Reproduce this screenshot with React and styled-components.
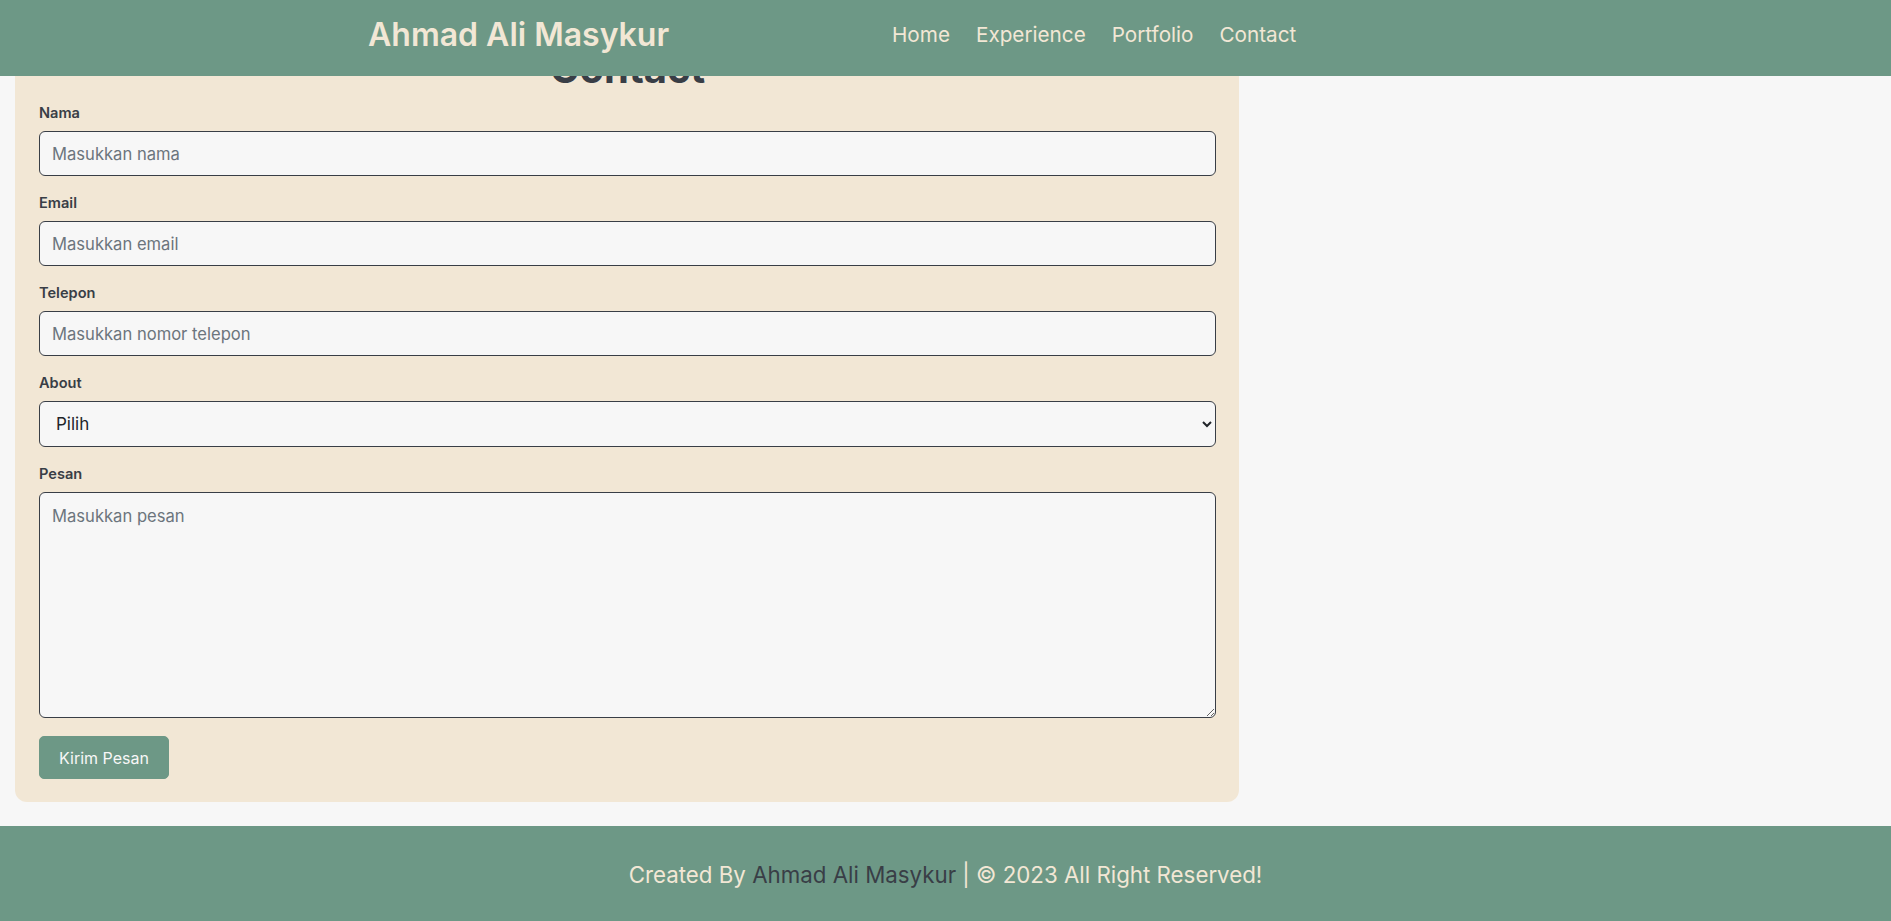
import React from 'react';
import styled, { createGlobalStyle } from 'styled-components';

const GlobalStyle = createGlobalStyle`
  * {
    box-sizing: border-box;
  }

  body {
    margin: 0;
    background: #f7f7f7;
    font-family: 'Inter', 'Noto Sans', sans-serif;
    color: #393e46;
  }
`;

const Header = styled.header`
  position: fixed;
  top: 0;
  left: 0;
  right: 0;
  z-index: 10;
  height: 76px;
  background: #6d9886;
  display: flex;
  align-items: center;
  padding: 0 0 7px 368px;
`;

const Brand = styled.a`
  font-size: 32px;
  font-weight: 600;
  color: #f2e7d5;
  text-decoration: none;
  width: 524px;
`;

const Nav = styled.nav`
  display: flex;
  gap: 26px;
`;

const NavLink = styled.a`
  font-size: 20.7px;
  color: #f2e7d5;
  text-decoration: none;
`;

const Main = styled.main`
  padding: 0 15px 24px;
`;

const Card = styled.section`
  width: 1224px;
  background: #f2e7d5;
  border-radius: 0 0 12px 12px;
  padding: 45px 23px 23px 24px;
`;

const Title = styled.h2`
  margin: 0 0 9px;
  font-size: 40px;
  line-height: 48px;
  font-weight: 700;
  text-align: center;
  color: #393e46;
`;

const Field = styled.div`
  margin-bottom: ${(p) => (p.$last ? '18px' : '16px')};
`;

const Label = styled.label`
  display: block;
  font-size: 14.6px;
  line-height: 22px;
  font-weight: 600;
  margin-bottom: 7px;
  color: #393e46;
`;

const Input = styled.input`
  display: block;
  width: 100%;
  height: 45px;
  padding: 0 12px;
  font-family: inherit;
  font-size: 16.6px;
  color: #212529;
  background: #f7f7f7;
  border: 1px solid #393e46;
  border-radius: 6px;
  outline: none;

  &::placeholder {
    color: #6c757d;
  }
`;

const Select = styled.select`
  display: block;
  width: 100%;
  height: 46px;
  padding: 0 12px;
  font-family: inherit;
  font-size: 17px;
  color: #212529;
  background: #f7f7f7;
  border: 1px solid #393e46;
  border-radius: 6px;
  outline: none;
`;

const TextArea = styled.textarea`
  display: block;
  width: 100%;
  height: 226px;
  padding: 11px 12px;
  font-family: inherit;
  font-size: 16.6px;
  line-height: 1.5;
  color: #212529;
  background: #f7f7f7;
  border: 1px solid #393e46;
  border-radius: 6px;
  outline: none;

  &::placeholder {
    color: #6c757d;
  }
`;

const Button = styled.button`
  height: 43px;
  padding: 0 19px;
  font-family: inherit;
  font-size: 16px;
  color: #f7f7f7;
  background: #6d9886;
  border: 1px solid #6d9886;
  border-radius: 5px;
  cursor: pointer;
`;

const Footer = styled.footer`
  height: 96px;
  background: #6d9886;
  display: flex;
  align-items: center;
  justify-content: center;
  font-size: 22.3px;
  color: #f2e7d5;
`;

const FooterName = styled.span`
  color: #393e46;
`;

const fields = [
  { id: 'nama', label: 'Nama', placeholder: 'Masukkan nama', type: 'text' },
  { id: 'email', label: 'Email', placeholder: 'Masukkan email', type: 'email' },
  { id: 'telepon', label: 'Telepon', placeholder: 'Masukkan nomor telepon', type: 'tel' },
];

export default function App() {
  return (
    <>
      <GlobalStyle />
      <Header>
        <Brand href="#">Ahmad Ali Masykur</Brand>
        <Nav>
          <NavLink href="#">Home</NavLink>
          <NavLink href="#">Experience</NavLink>
          <NavLink href="#">Portfolio</NavLink>
          <NavLink href="#">Contact</NavLink>
        </Nav>
      </Header>

      <Main>
        <Card>
          <Title>Contact</Title>
          {fields.map((f) => (
            <Field key={f.id}>
              <Label htmlFor={f.id}>{f.label}</Label>
              <Input id={f.id} type={f.type} placeholder={f.placeholder} />
            </Field>
          ))}
          <Field>
            <Label htmlFor="about">About</Label>
            <Select id="about" defaultValue="">
              <option value="">Pilih</option>
              <option value="kerja">Kerja sama</option>
              <option value="lain">Lainnya</option>
            </Select>
          </Field>
          <Field $last>
            <Label htmlFor="pesan">Pesan</Label>
            <TextArea id="pesan" placeholder="Masukkan pesan" />
          </Field>
          <Button type="submit">Kirim Pesan</Button>
        </Card>
      </Main>

      <Footer>
        Created By&nbsp;<FooterName>Ahmad Ali Masykur</FooterName>&nbsp;| © 2023 All Right Reserved!
      </Footer>
    </>
  );
}
